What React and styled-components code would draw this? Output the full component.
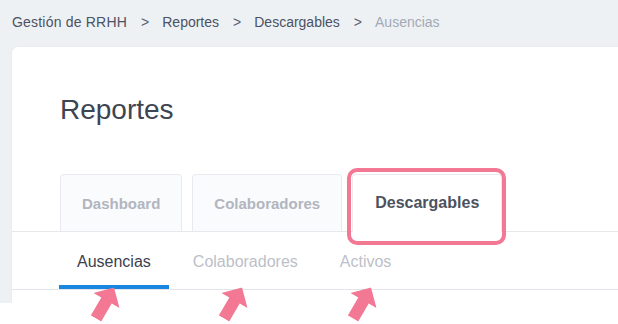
import React from 'react';
import styled, { createGlobalStyle } from 'styled-components';

const GlobalStyle = createGlobalStyle`
  body {
    margin: 0;
    background: #ffffff;
    font-family: 'Liberation Sans', Arial, sans-serif;
  }
`;

const Stage = styled.div`
  position: relative;
  width: 618px;
  height: 324px;
  overflow: hidden;
  background: #ffffff;
`;

const Shot = styled.div`
  display: flex;
  flex-direction: column;
  height: 303px;
  padding-left: 12px;
  background: #eef1f4;
  overflow: hidden;
`;

const Breadcrumb = styled.nav`
  display: flex;
  align-items: center;
  height: 47px;
  padding-bottom: 3px;
  box-sizing: border-box;
  font-size: 14px;
  color: #4b5262;
`;

const Crumb = styled.span`
  color: ${(p) => (p.current ? '#a3a9b4' : '#4b5262')};
  letter-spacing: ${(p) => (p.first ? '0.2px' : '0')};
`;

const Sep = styled.span`
  margin: 0 13px 0 14px;
  color: #5a6070;
`;

const Card = styled.div`
  flex: 1;
  background: #ffffff;
  border-radius: 6px 0 0 0;
  box-shadow: 0 0 2px rgba(40, 50, 70, 0.08);
  padding-top: 47px;
`;

const Title = styled.h1`
  margin: 0 0 48px 48px;
  font-size: 28px;
  line-height: 32px;
  font-weight: 400;
  color: #3d4452;
`;

const TabBar = styled.div`
  display: flex;
  gap: 10px;
  padding-left: 48px;
  border-bottom: 1px solid #e6e8ec;
`;

const Tab = styled.div`
  position: relative;
  display: flex;
  align-items: center;
  height: 58px;
  padding: 0 ${(p) => (p.active ? '22px' : '21px')};
  box-sizing: border-box;
  margin-bottom: -1px;
  border: 1px solid #e8eaee;
  border-bottom-color: ${(p) => (p.active ? '#ffffff' : '#e6e8ec')};
  border-radius: 4px 4px 0 0;
  background: ${(p) => (p.active ? '#ffffff' : '#fafbfc')};
  font-size: ${(p) => (p.active ? '16px' : '15px')};
  font-weight: 700;
  color: ${(p) => (p.active ? '#4d5260' : '#b1b5c0')};
`;

const Highlight = styled.span`
  position: absolute;
  top: -7px;
  left: -6px;
  right: -5px;
  bottom: -14px;
  border: 4px solid #f27894;
  border-radius: 10px;
  pointer-events: none;
`;

const SubBar = styled.div`
  display: flex;
  gap: 6px;
  padding-left: 47px;
  border-bottom: 1px solid #e3e5ea;
`;

const SubTab = styled.div`
  display: flex;
  align-items: center;
  height: 57px;
  padding: 6px 18px 0;
  box-sizing: border-box;
  border-bottom: 4px solid ${(p) => (p.active ? '#1b86df' : 'transparent')};
  font-size: 16px;
  color: ${(p) => (p.active ? '#3b414e' : '#bcc0c8')};
`;

const Arrow = styled.svg`
  position: absolute;
  width: 30px;
  height: 36px;
  transform: rotate(30deg);
`;

function PointerArrow({ x, y }) {
  return (
    <Arrow viewBox="0 0 30 36" style={{ left: x - 15, top: y - 18 }}>
      <polygon points="15,0 30,15 21,15 21,36 9,36 9,15 0,15" fill="#f27894" />
    </Arrow>
  );
}

export default function App() {
  return (
    <Stage>
      <GlobalStyle />
      <Shot>
        <Breadcrumb>
          <Crumb first>Gestión de RRHH</Crumb>
          <Sep>&gt;</Sep>
          <Crumb>Reportes</Crumb>
          <Sep>&gt;</Sep>
          <Crumb>Descargables</Crumb>
          <Sep>&gt;</Sep>
          <Crumb current>Ausencias</Crumb>
        </Breadcrumb>
        <Card>
          <Title>Reportes</Title>
          <TabBar>
            <Tab>Dashboard</Tab>
            <Tab>Colaboradores</Tab>
            <Tab active>
              Descargables
              <Highlight />
            </Tab>
          </TabBar>
          <SubBar>
            <SubTab active>Ausencias</SubTab>
            <SubTab>Colaboradores</SubTab>
            <SubTab>Activos</SubTab>
          </SubBar>
        </Card>
      </Shot>
      <PointerArrow x={105} y={303} />
      <PointerArrow x={233} y={303} />
      <PointerArrow x={362} y={303} />
    </Stage>
  );
}
